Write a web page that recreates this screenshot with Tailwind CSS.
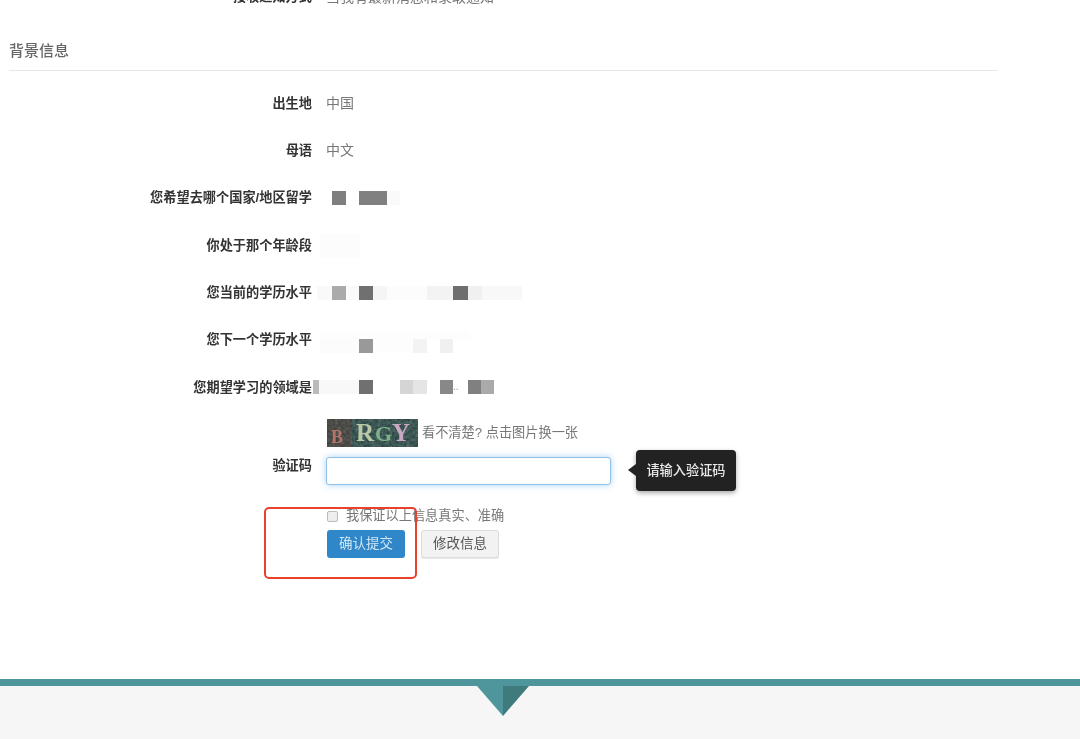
<!DOCTYPE html>
<html lang="zh-CN">
<head>
    <meta charset="UTF-8">
    <title>背景信息</title>
    <script src="https://cdn.jsdelivr.net/npm/@tailwindcss/browser@4"></script>
</head>
<body class="bg-white">
<div class="relative w-[1080px] h-[739px] overflow-hidden bg-white text-[13.2px] text-[#777] blur-[0.55px] font-['Liberation_Sans','Noto_Sans_CJK_SC',sans-serif]">
    <div class="w-[989px] ml-[9px] mt-[-26px]">
        <!-- previous section, cut off by the top edge -->
        <div class="flex items-center h-[46px]">
            <div class="w-[303px] text-right font-bold text-[#333]">接收通知方式</div>
            <div class="ml-[14px] text-sm">当我有最新消息和录取通知</div>
        </div>

        <!-- 背景信息 -->
        <h2 class="mt-[21px] h-[29px] leading-[20px] text-[15px] font-medium text-[#666]">背景信息</h2>
        <div class="h-px bg-[#e8e8e8]"></div>

        <div class="mt-[9px]">
            <div class="flex items-center h-[47.3px]">
                <div class="w-[303px] text-right font-bold text-[#333]">出生地</div>
                <div class="ml-[14px] text-sm -mt-px">中国</div>
            </div>
            <div class="flex items-center h-[47.3px]">
                <div class="w-[303px] text-right font-bold text-[#333]">母语</div>
                <div class="ml-[14px] text-sm -mt-px">中文</div>
            </div>
            <div class="flex items-center h-[47.3px]">
                <div class="w-[303px] text-right font-bold text-[#333]">您希望去哪个国家/地区留学</div>
                <div class="ml-[20px] flex h-[14px]">
                    <span class="w-[14px] bg-[#7f7f7f]"></span>
                    <span class="w-[13px]"></span>
                    <span class="w-[28px] bg-[#808080]"></span>
                    <span class="w-[13px] bg-[#fafafa]"></span>
                </div>
            </div>
            <div class="flex items-center h-[47.3px]">
                <div class="w-[303px] text-right font-bold text-[#333]">你处于那个年龄段</div>
                <div class="ml-[8px] w-[40px] h-[24px] bg-[#fcfcfc]"></div>
            </div>
            <div class="flex items-center h-[47.3px]">
                <div class="w-[303px] text-right font-bold text-[#333]">您当前的学历水平</div>
                <div class="ml-[5px] flex h-[14px]">
                    <span class="w-[15px] bg-[#f9f9f9]"></span>
                    <span class="w-[14px] bg-[#aaaaaa]"></span>
                    <span class="w-[13px] bg-[#fafafa]"></span>
                    <span class="w-[14px] bg-[#707070]"></span>
                    <span class="w-[14px] bg-[#f5f5f5]"></span>
                    <span class="w-[40px] bg-[#fcfcfc]"></span>
                    <span class="w-[26px] bg-[#f3f3f3]"></span>
                    <span class="w-[15px] bg-[#6e6e6e]"></span>
                    <span class="w-[14px] bg-[#f0f0f0]"></span>
                    <span class="w-[40px] bg-[#f8f8f8]"></span>
                </div>
            </div>
            <div class="flex items-center h-[47.3px]">
                <div class="w-[303px] text-right font-bold text-[#333]">您下一个学历水平</div>
                <div class="ml-[8px] flex flex-col mt-[5px]">
                    <div class="flex h-[7px]">
                        <span class="w-[150px] bg-[#fdfdfd]"></span>
                    </div>
                    <div class="flex h-[14px]">
                        <span class="w-[39px] bg-[#fcfcfc]"></span>
                        <span class="w-[14px] bg-[#999999]"></span>
                        <span class="w-[40px] bg-[#fdfdfd]"></span>
                        <span class="w-[14px] bg-[#f3f3f3]"></span>
                        <span class="w-[13px]"></span>
                        <span class="w-[13px] bg-[#f0f0f0]"></span>
                    </div>
                </div>
            </div>
            <div class="flex items-center h-[47.3px]">
                <div class="w-[303px] text-right font-bold text-[#333]">您期望学习的领域是</div>
                <div class="ml-[1px] flex h-[14px]">
                    <span class="w-[6px] bg-[#bbbbbb]"></span>
                    <span class="w-[40px] bg-[#f8f8f8]"></span>
                    <span class="w-[14px] bg-[#707070]"></span>
                    <span class="w-[27px]"></span>
                    <span class="w-[13px] bg-[#d5d5d5]"></span>
                    <span class="w-[14px] bg-[#e5e5e5]"></span>
                    <span class="w-[13px]"></span>
                    <span class="w-[13px] bg-[#888888]"></span>
                    <span class="w-[15px] text-[10px] leading-[14px] text-[#999]">..</span>
                    <span class="w-[13px] bg-[#808080]"></span>
                    <span class="w-[13px] bg-[#aaaaaa]"></span>
                </div>
            </div>
        </div>

        <!-- 验证码 -->
        <div class="flex items-start mt-[8px] ml-[318px] h-[28px]">
            <svg class="w-[91px] h-[28px] shrink-0" viewBox="0 0 91 28">
                <filter id="noise">
                    <feTurbulence type="fractalNoise" baseFrequency="0.35" numOctaves="2" seed="4"/>
                    <feColorMatrix values="0 0 0 0 0.4  0 0 0 0 0.55  0 0 0 0 0.5  0.6 0 0 0 -0.15"/>
                </filter>
                <rect width="91" height="28" fill="#2a4443"/>
                <rect width="91" height="28" filter="url(#noise)"/>
                <rect width="24" height="28" fill="#6b3a33" opacity="0.35"/>
                <text x="4" y="24" font-family="Liberation Serif" font-weight="bold" font-size="18" fill="#b5736b">B</text>
                <text x="29" y="22" font-family="Liberation Serif" font-weight="bold" font-size="25" fill="#b9c9a8">R</text>
                <text x="48" y="22" font-family="Liberation Serif" font-weight="bold" font-size="22" fill="#7fb08c">G</text>
                <text x="65" y="22" font-family="Liberation Serif" font-weight="bold" font-size="25" fill="#c9a9c4">Y</text>
            </svg>
            <span class="ml-[4px] leading-[28px]">看不清楚? 点击图片换一张</span>
        </div>
        <div class="flex items-start mt-[10px]">
            <div class="w-[303px] text-right font-bold text-[#333] leading-[18px]">验证码</div>
            <input type="text" class="ml-[14px] w-[285px] h-[28px] bg-white border border-[#8fc1e8] rounded-[3px] shadow-[0_0_6px_rgba(82,168,236,0.5)] outline-none">
        </div>

        <label class="flex items-center mt-[22px] ml-[318px] h-[18px]">
            <span class="w-[11px] h-[11px] bg-[#eee] border border-[#bbb] rounded-[2px]"></span>
            <span class="ml-[8px]">我保证以上信息真实、准确</span>
        </label>
        <div class="flex mt-[5px] ml-[318px]">
            <button class="w-[78px] h-[28px] bg-[#2f87c9] text-[#cfe6f5] text-[13.5px] rounded-[3px]">确认提交</button>
            <button class="ml-[16px] w-[78px] h-[28px] bg-[#f2f2f2] border border-[#ddd] text-[#555] text-[13.5px] rounded-[3px] shadow-[0_1px_1px_rgba(0,0,0,0.1)]">修改信息</button>
        </div>
    </div>

    <!-- tooltip next to the captcha input -->
    <div class="absolute left-[636px] top-[450px] w-[100px] h-[41px] flex items-center justify-center bg-[#222] text-[#e8e8e8] font-medium rounded-[4px] shadow-[0_2px_5px_rgba(0,0,0,0.35)]">请输入验证码</div>
    <div class="absolute left-[628px] top-[464px] w-0 h-0 border-y-[6px] border-y-transparent border-r-[8px] border-r-[#222]"></div>

    <!-- red annotation box -->
    <div class="absolute left-[264px] top-[507px] w-[153px] h-[72px] border-2 border-[#e8412c] rounded-[5px]"></div>

    <!-- footer -->
    <div class="absolute left-0 right-0 top-[679px] bottom-0 bg-[#f6f6f6]">
        <div class="h-[7px] bg-[#4f959c]"></div>
        <svg class="absolute left-[477px] top-[7px] w-[52px] h-[30px]" viewBox="0 0 52 30">
            <polygon points="0,0 26,30 26,0" fill="#4f959c"/>
            <polygon points="26,0 52,0 26,30" fill="#3f7b7d"/>
        </svg>
    </div>
</div>
</body>
</html>
